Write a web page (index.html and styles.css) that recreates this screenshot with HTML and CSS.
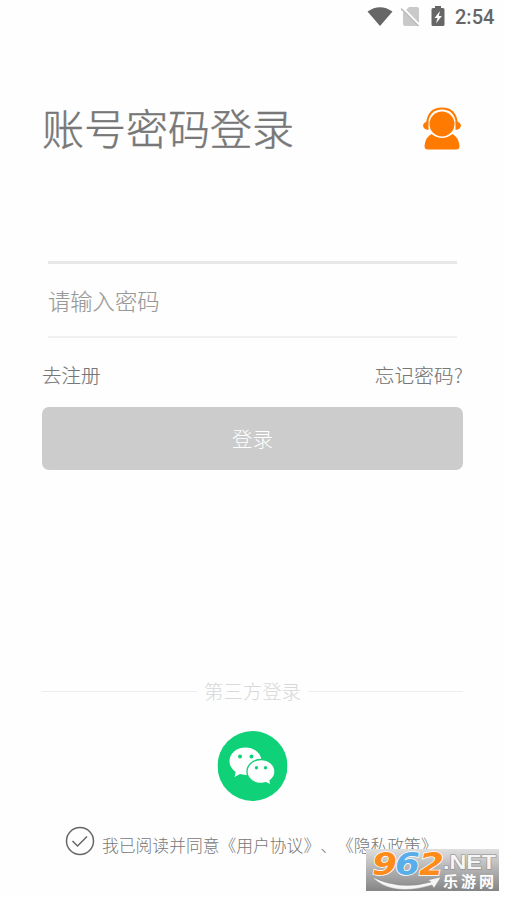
FILE: index.html
```html
<!DOCTYPE html>
<html lang="zh-CN">
<head>
<meta charset="utf-8">
<title>账号密码登录</title>
<link rel="stylesheet" href="styles.css">
</head>
<body>
<div class="screen">
  <header class="status">
    <svg class="wifi" width="26" height="20" viewBox="0 0 26 20"><path d="M.5 4.500Q13-4 25.500 4.500L13 19Z"/></svg>
    <svg class="nosim" width="19" height="20" viewBox="0 0 19 20"><path d="M8 0h8q2 0 2 2v15.500q0 1.500-2 1.500H4q-2 0-2-2V6Z" fill="#c9c9c9"/><path d="M1 0 19 18.500" stroke="#fff" stroke-width="2"/><path d="M0 1.500 17.500 19" stroke="#bcbcbc" stroke-width="1.600"/></svg>
    <svg class="battery" width="14" height="21" viewBox="0 0 14 21"><path d="M4 0h6v2h2q1.500 0 1.500 1.500v15q0 1.500-1.500 1.500H2q-1.500 0-1.500-1.500v-15Q.5 2 2 2h2Z"/><path d="M9 5 3.500 12H6.500L5 17.500 10.800 10H7.800Z" fill="#fff"/></svg>
    <span class="time">2:54</span>
  </header>
  <div class="heading">
    <h1>账号密码登录</h1>
    <svg class="service" width="40" height="44" viewBox="0 0 40 44"><path d="M5 17C6 6 12 1.500 20 1.500S34 6 35 17" fill="none" stroke="#ff7a00" stroke-width="2"/><path d="M6.500 14v9Q1.500 22.500 1 18.500 1.500 15 6.500 14ZM33.500 14v9q5-.5 5.500-4.500-.5-3.500-5.500-4.500Z"/><circle cx="20" cy="17" r="12.500"/><path d="M9.500 27Q20 35 30.500 27q6 3 7 12 0 3.500-3.500 3.500h-28Q2.500 42.500 2.500 39q1-9 7-12Z"/></svg>
  </div>
  <div class="account"></div>
  <div class="password">请输入密码</div>
  <div class="links"><span>去注册</span><span class="forgot">忘记密码?</span></div>
  <div class="login">登录</div>
  <div class="third"><span>第三方登录</span></div>
  <svg class="wechat" width="70" height="70" viewBox="0 0 70 70"><circle cx="35" cy="35" r="35" fill="#0fd178"/><path d="M28 16.500c9 0 16 6 16 13.700s-7 13.700-16 13.700q-3 0-5.500-.8L17 46l1.200-5Q12 36.500 12 30.200C12 22.500 19 16.500 28 16.500Z" fill="#fff"/><path d="M43.500 28.500c7.700 0 14 5.200 14 12 0 4-1.900 7-5 9.200L53.500 54l-5-2.300q-2.300.8-5 .8c-7.700 0-14-5.200-14-12s6.300-12 14-12Z" fill="#fff" stroke="#0fd178" stroke-width="1.300"/><g fill="#0fd178"><circle cx="22.500" cy="25.500" r="2"/><circle cx="34" cy="25.500" r="2"/><circle cx="39" cy="36.800" r="1.700"/><circle cx="48" cy="36.800" r="1.700"/></g></svg>
  <div class="agree">
    <svg width="30" height="30" viewBox="0 0 30 30" fill="none" stroke="#666" stroke-width="1.500"><circle cx="15" cy="15" r="13.500"/><path d="m7.500 15 5 5L22 10.500"/></svg>
    <span>我已阅读并同意《用户协议》、《隐私政策》</span>
  </div>
  <div class="mark">
    <svg width="133" height="43" viewBox="0 0 133 43">
      <g class="digits" font-size="32"><text x="6" y="26" textLength="25" lengthAdjust="spacingAndGlyphs" fill="#ff8b1a">9</text><text x="29" y="26" textLength="25" lengthAdjust="spacingAndGlyphs" fill="#59aeea">6</text><text x="53" y="26" textLength="25" lengthAdjust="spacingAndGlyphs" fill="#ff8b1a">2</text></g>
      <text class="net" x="77" y="20" textLength="53" lengthAdjust="spacingAndGlyphs">.NET</text>
      <path d="M6 28Q34 42 65 33l-3-2 13-3-7 11-2-3Q26 48 6 28Z" fill="#f5f5f5" stroke="#888" stroke-width=".4"/>
      <text class="site" x="77" y="38" textLength="51">乐游网</text>
    </svg>
  </div>
</div>
</body>
</html>
```
FILE: styles.css
```css
* { box-sizing: border-box; }
body { margin: 0; background: #fff; font-family: "Noto Sans CJK SC", sans-serif; font-weight: 300; color: #777; text-spacing-trim: space-all; font-kerning: none; }
.screen { position: relative; height: 897px; padding: 0 42px; display: flex; flex-direction: column; overflow: hidden; background: #fefefe; }
.status { display: flex; align-items: center; height: 34px; margin-right: -31px; justify-content: flex-end; fill: #666; flex: none; }
.wifi, .nosim, .battery { margin-top: -1px; }
.nosim { margin-left: 8px; }
.battery { margin-left: 11px; }
.time { font: 500 20px/34px Roboto, sans-serif; color: #666; margin-left: 10px; width: 39px; white-space: nowrap; }
.heading { display: flex; justify-content: space-between; align-items: center; height: 60px; margin-top: 65px; flex: none; }
h1 { margin: 0; padding-bottom: 4px; font-size: 42px; line-height: 56px; font-weight: 300; -webkit-text-stroke: .45px #777; }
.service { fill: #ff7a00; margin-right: 1px; }
.account { height: 105px; margin: 0 6px; border-bottom: 3px solid #e7e8ea; flex: none; }
.password { height: 74px; margin: 0 6px; border-bottom: 2px solid #eef0f1; font-size: 22.300px; line-height: 72px; color: #999; flex: none; -webkit-text-stroke: .15px #999; }
.links { display: flex; justify-content: space-between; height: 69px; font-size: 19.500px; line-height: 73px; flex: none; -webkit-text-stroke: .15px #777; }
.forgot { letter-spacing: .3px; }
.login { height: 63px; border-radius: 7px; background: #ccc; color: #fff; font-size: 20.500px; line-height: 63px; text-align: center; flex: none; }
.third { display: flex; align-items: center; height: 30px; margin-top: 206px; gap: 7px; font-size: 19.400px; line-height: 30px; color: #d8d8d8; flex: none; }
.third::before, .third::after { content: ""; flex: 1; height: 1px; background: #ededed; }
.wechat { display: block; margin: 25px auto 0; flex: none; transform: translateX(-.5px); }
.agree { display: flex; margin: 25px 0 0 23px; font-size: 16.800px; line-height: 38px; white-space: nowrap; flex: none; }
.agree span { margin-left: 7px; }
.mark { position: absolute; left: 366px; top: 849px; width: 133px; height: 42px; background: linear-gradient(#dedede, #858585); }
.mark svg { display: block; overflow: visible; }
.digits { font-family: "DejaVu Sans", sans-serif; font-weight: bold; font-style: italic; stroke: #fff; stroke-width: 1.500px; paint-order: stroke; }
.net { font: bold 20px "Liberation Sans", sans-serif; fill: #f5f5f5; stroke: #888; stroke-width: 1px; paint-order: stroke; }
.site { font: bold 15px "Noto Sans CJK SC", sans-serif; fill: #fff; }
```
